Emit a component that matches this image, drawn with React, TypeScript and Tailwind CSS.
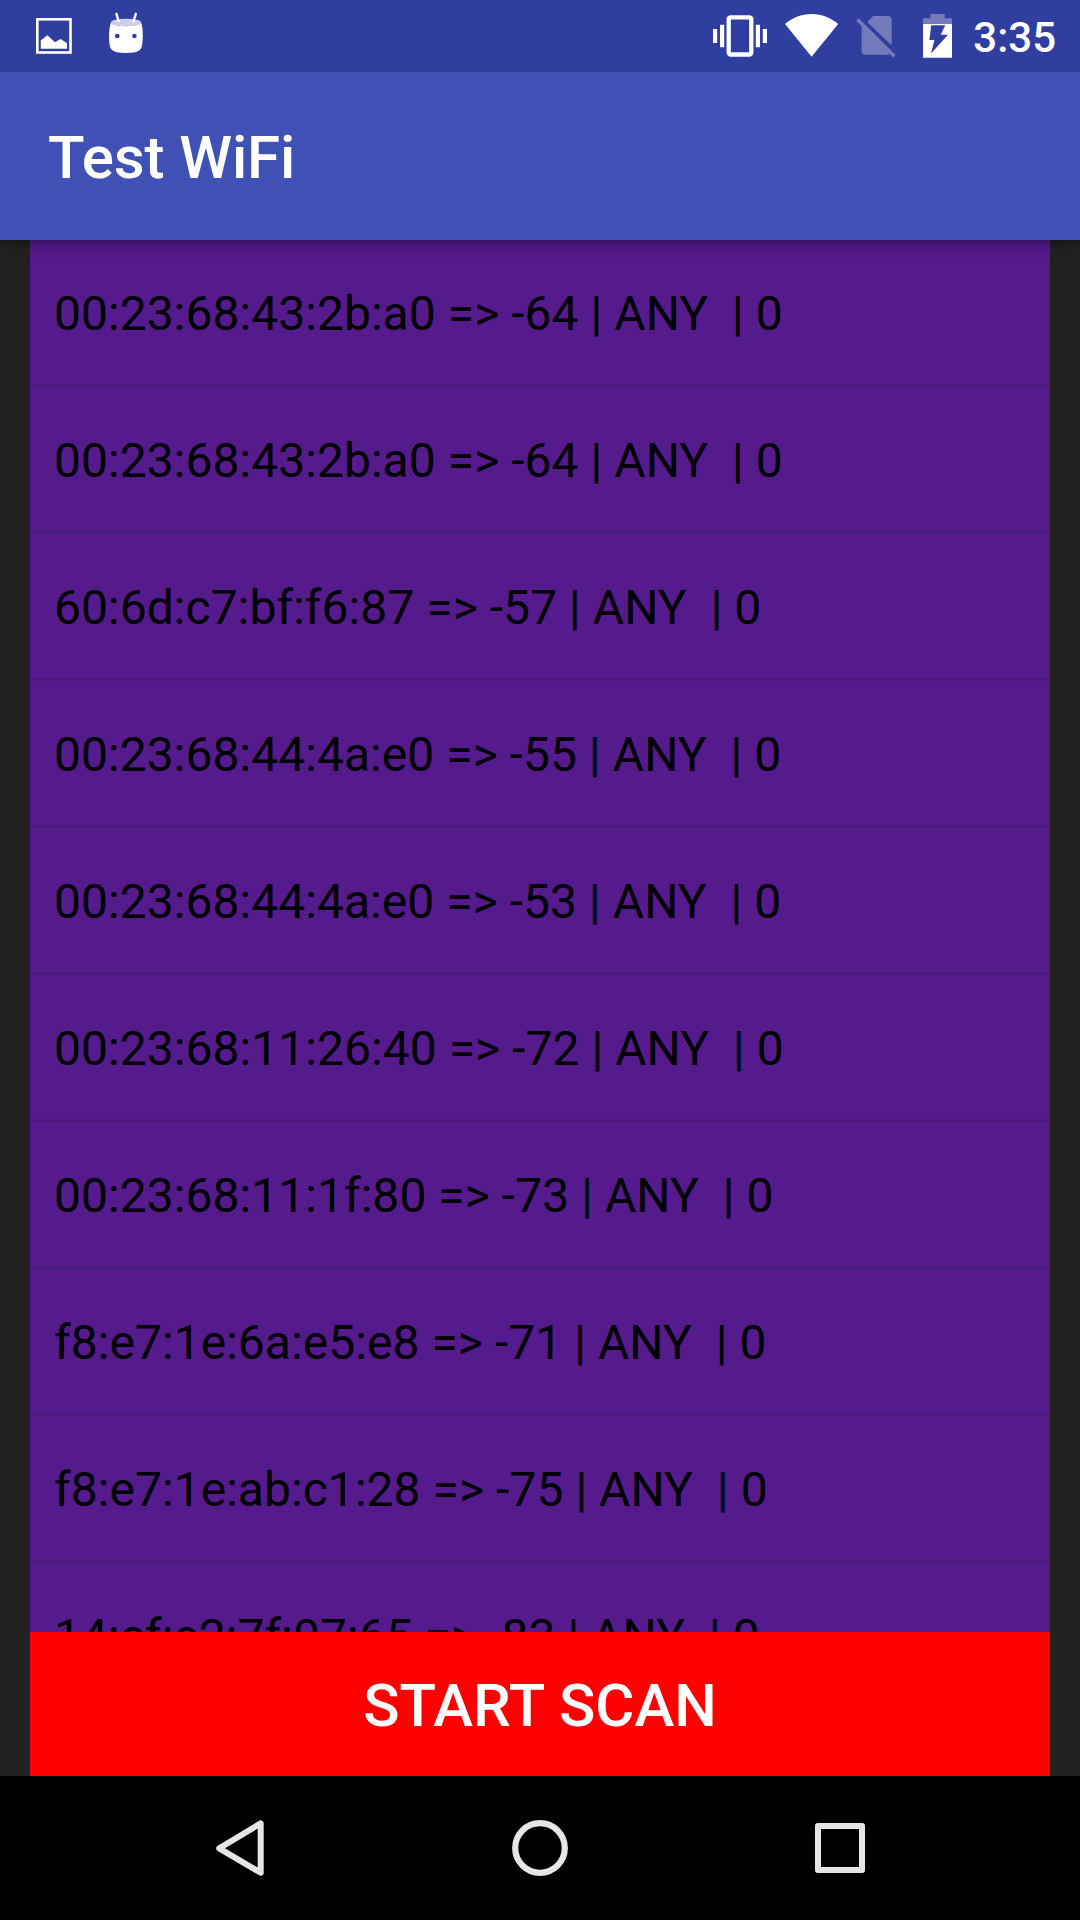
const networks = [
  "00:23:68:43:2b:a0 => -64 | ANY  | 0",
  "00:23:68:43:2b:a0 => -64 | ANY  | 0",
  "60:6d:c7:bf:f6:87 => -57 | ANY  | 0",
  "00:23:68:44:4a:e0 => -55 | ANY  | 0",
  "00:23:68:44:4a:e0 => -53 | ANY  | 0",
  "00:23:68:11:26:40 => -72 | ANY  | 0",
  "00:23:68:11:1f:80 => -73 | ANY  | 0",
  "f8:e7:1e:6a:e5:e8 => -71 | ANY  | 0",
  "f8:e7:1e:ab:c1:28 => -75 | ANY  | 0",
  "14:cf:e2:7f:07:65 => -83 | ANY  | 0",
];

function StatusBar() {
  return (
    <div className="z-20 flex h-[72px] shrink-0 items-stretch justify-between bg-[#303f9f] pl-9 pr-6 text-white">
      <div className="flex">
        {/* Picture notification */}
        <svg className="h-[72px] w-9" viewBox="0 0 36 72" fill="currentColor">
          <rect x="1.3" y="19.3" width="33.2" height="33.2" fill="none" stroke="currentColor" strokeWidth="2.6" />
          <path d="M4.8 40.6 L11.4 35.2 L19 42.2 L24.7 39 L31 43.2 V48.7 H4.8Z" />
        </svg>
        {/* Android debugging head */}
        <svg className="ml-9 h-[72px] w-9" viewBox="0 0 36 72" fill="currentColor">
          <path d="M3 22.5 C1 27 0.6 38 1.8 45.5 C2.6 50.5 6 52.9 18 52.9 C30 52.9 33.2 50.5 34 45.5 C35.4 38 35 27 33 22.5 C29 27.4 7 27.4 3 22.5Z" />
          <ellipse cx="18" cy="22.6" rx="15.2" ry="3.9" fill="#cbcfe7" />
          <path d="M8.4 13.8 L10.6 21.2 M27.8 13.8 L25.6 21.2" fill="none" stroke="currentColor" strokeWidth="2.4" strokeLinecap="round" />
          <circle cx="9.3" cy="36" r="2.3" fill="#303f9f" />
          <circle cx="26.4" cy="36" r="2.3" fill="#303f9f" />
        </svg>
      </div>
      <div className="flex">
        {/* Vibrate */}
        <svg className="h-[72px] w-[54px]" viewBox="0 0 54 72" fill="currentColor">
          <rect x="15.7" y="17.3" width="22.6" height="37.2" rx="2" fill="none" stroke="currentColor" strokeWidth="4.3" />
          <path d="M0 29h4.2v14H0z M7 24.8h4.2v22.4H7z M42.8 24.8H47v22.4h-4.2z M49.8 29H54v14h-4.2z" />
        </svg>
        {/* Wi-Fi */}
        <svg className="ml-[18px] h-[72px] w-[54px]" viewBox="0 0 54 72" fill="currentColor">
          <path d="M26.6 56.8 L0 24 C7 18 16 14 26.6 14 C37 14 46 18 53.2 24Z" />
        </svg>
        {/* No SIM */}
        <svg className="ml-[17px] h-[72px] w-10" viewBox="0 0 40 72" fill="#737bbd">
          <path d="M11.2 22 L16.4 16.7 Q17 16.1 18 16.1 H32 Q35.7 16.4 35.7 19.6 V45.6Z" />
          <path d="M5.6 24.8 L33.5 53.8 Q32.8 54.7 31.5 54.7 H9 Q5.6 54.5 5.6 51.2Z" />
          <path d="M2.6 18.3 L39.6 54.9 L37.1 57.5 L0.2 20.8Z" />
        </svg>
        {/* Charging battery */}
        <svg className="ml-[27px] h-[72px] w-[29px]" viewBox="0 0 29 72" fill="currentColor">
          <path d="M0 24 V18.2 H7.2 V14 H21.7 V18.2 H29 V24Z" fill="#737bbd" />
          <path fillRule="evenodd" d="M0 24 H29 V57.8 H0Z M8.2 25.2 L6.4 40 H11.4 L8 53.4 L25 34.8 H17.7 L22.3 25.2Z" />
        </svg>
        <span className="ml-[20px] flex w-[84px] items-center justify-end whitespace-nowrap pt-1 text-[42px] font-medium leading-[68px]">3:35</span>
      </div>
    </div>
  );
}

function NavBar() {
  return (
    <div className="flex h-36 shrink-0 items-center justify-between bg-black pl-[216px] pr-[215px] text-[#e6e6e6]">
      <svg className="h-14 w-12" viewBox="0 0 48 56" fill="none" stroke="currentColor" strokeWidth="6" strokeLinejoin="round">
        <path d="M44.7 3.3 V52.7 L3.2 28.3Z" />
      </svg>
      <svg className="ml-[1px] h-14 w-14" viewBox="0 0 56 56" fill="none" stroke="currentColor" strokeWidth="6.2">
        <circle cx="28" cy="28" r="24.8" />
      </svg>
      <svg className="h-[50px] w-[50px]" viewBox="0 0 50 50" fill="none" stroke="currentColor" strokeWidth="6" strokeLinejoin="round">
        <rect x="3" y="3" width="44" height="44" />
      </svg>
    </div>
  );
}

export default function App() {
  return (
    <div className="flex h-[1920px] w-[1080px] flex-col overflow-hidden bg-[#212121] font-['Roboto',sans-serif]">
      <StatusBar />
      <header className="z-10 flex h-[168px] shrink-0 items-center bg-[#3f51b5] px-12 pt-1 shadow-[0_4px_12px_rgba(0,0,0,0.35)]">
        <h1 className="text-[60px] font-medium leading-[70px] tracking-[-0.1px] text-white">Test WiFi</h1>
      </header>
      <main className="flex min-h-0 flex-1 flex-col px-[30px]">
        <ul className="min-h-0 flex-1 overflow-hidden bg-[#551a8b]">
          {networks.map((network, i) => (
            <li key={i} className="flex h-[147px] items-center whitespace-pre border-b-[3px] border-[#4d187d] px-6 pt-1 text-5xl tracking-[0.05px] text-black">
              {network}
            </li>
          ))}
        </ul>
        <button className="h-36 w-full shrink-0 bg-[#ff0000] pt-1 text-[60px] font-medium leading-[70px] text-white">START SCAN</button>
      </main>
      <NavBar />
    </div>
  );
}
